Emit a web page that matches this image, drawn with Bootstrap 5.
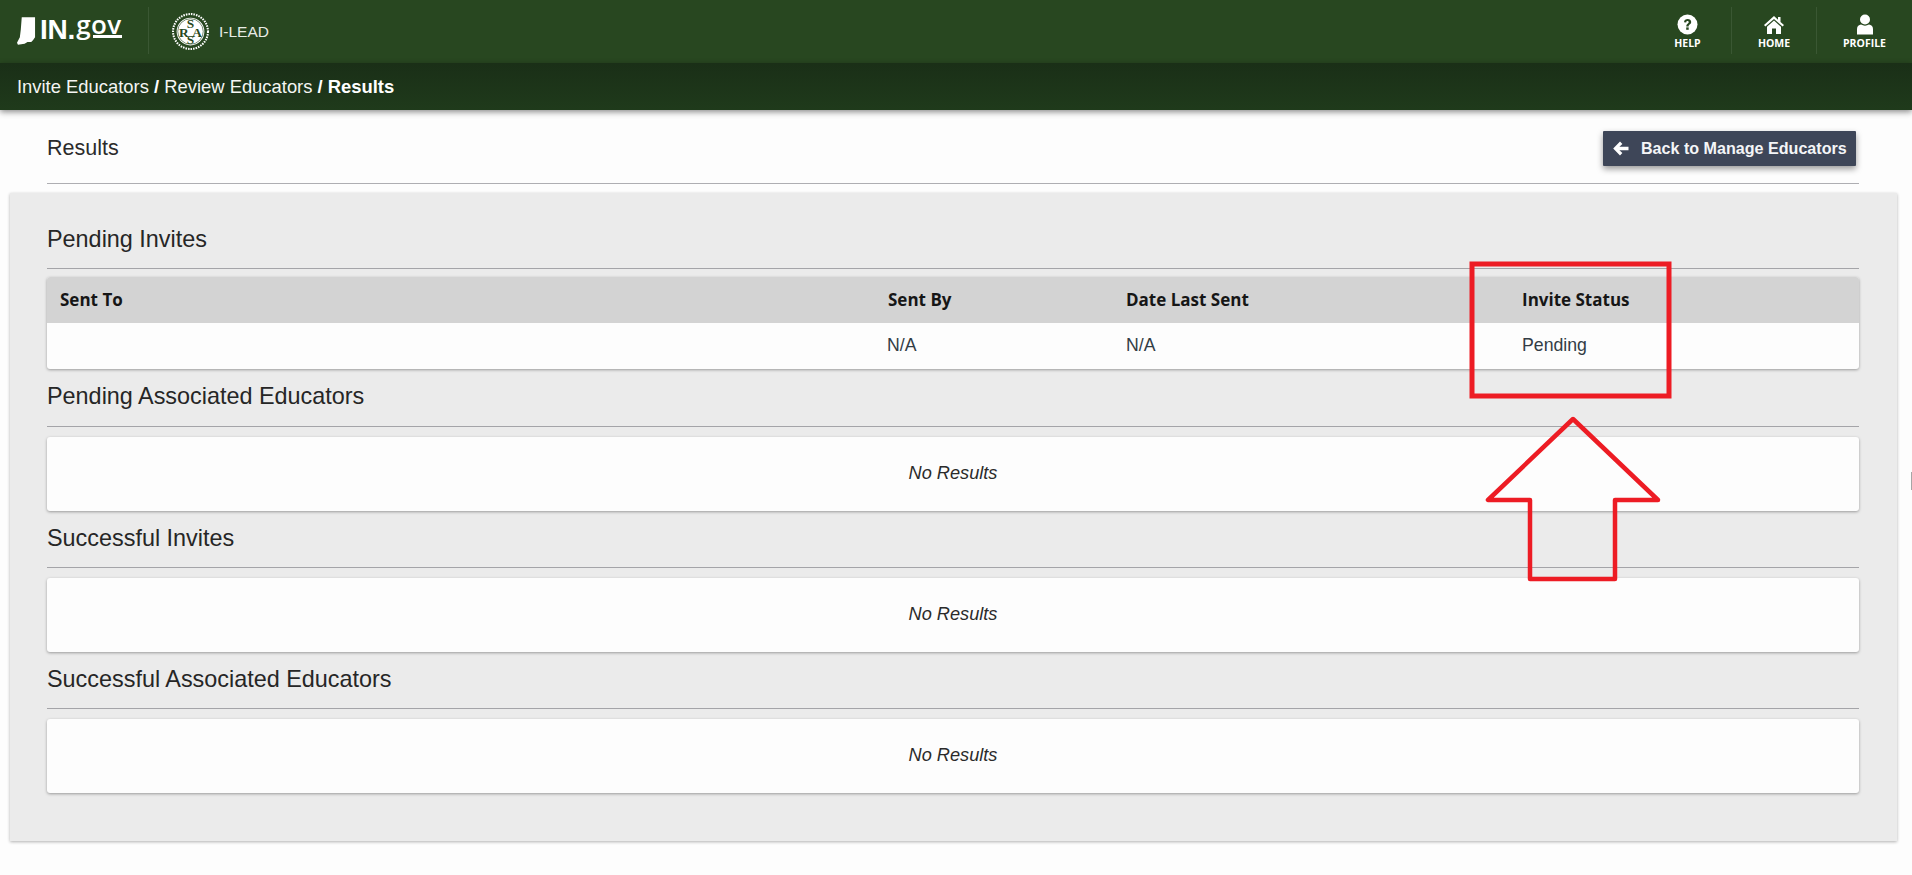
<!DOCTYPE html>
<html lang="en">
<head>
<meta charset="utf-8">
<title>Results</title>
<link href="https://cdn.jsdelivr.net/npm/bootstrap@5.3.0/dist/css/bootstrap.min.css" rel="stylesheet">
<style>
html,body{height:875px;overflow:hidden}
body{font-family:"Liberation Sans",Arial,sans-serif;background:#fdfdfd;color:#212121;position:relative}
.topbar{height:63px;background:#284720;padding:0}
.brand-in{font-family:"Liberation Sans",sans-serif;font-weight:700;font-size:28px;line-height:1;color:#fff;letter-spacing:-.2px;white-space:nowrap}
.brand-gov{position:relative;top:-5px;display:inline-block;font-family:"Open Sans",sans-serif;font-weight:600;font-size:26px;letter-spacing:.4px;margin-left:1px}
.brand-line{position:absolute;left:17px;right:0;bottom:-1px;height:3px;background:#fff}
.logo-cell{width:149px;height:47px;border-right:1px solid #3a5733;padding-left:17px;margin-bottom:3px}
.seal-cell{padding-left:23px;gap:10px;color:#e8ece6;font-size:15.5px}
.seal-type{font-family:"Liberation Serif",serif;font-size:13px;font-weight:700;fill:#284720}
.tool{height:47px;margin-bottom:3px;padding-top:7px;display:flex;flex-direction:column;align-items:center;justify-content:flex-start;color:#fff;font-family:"Open Sans",sans-serif;font-weight:700;font-size:10.5px;line-height:14px;border-right:1px solid #3a5733}
.tool svg{display:block;margin-bottom:1px}
.tool-help{width:88px}
.tool-home{width:85px}
.tool-profile{width:95px;border-right:0}
.crumbbar{height:47px;background:linear-gradient(#1a2f17,#1f3a1b);color:#f4f6f3;font-size:18.4px;padding-left:17px;box-shadow:0 2px 6px rgba(0,0,0,.45);position:relative}
.crumbbar b{color:#fff}
.headrow{margin:21px 53px 0 47px;height:53px;border-bottom:1px solid #aeaeb2;padding-right:3px}
.headrow .ttl{font-size:21.5px;line-height:34px;color:#2b2b2b}
.backbtn{width:253px;height:35px;background:#3e4658;color:#f4f5f7;font-weight:700;font-size:16.1px;border:0;border-radius:1px;box-shadow:0 3px 6px rgba(0,0,0,.4);padding:0 0 0 10px;gap:12px;white-space:nowrap}
.panel-main{margin:9px 15px 0 10px;height:648px;background:#ebebeb;box-shadow:0 1px 3px rgba(0,0,0,.3);padding:29px 38px 0 37px}
.sec-title{font-size:23.4px;line-height:35px;height:47px;color:#262626;border-bottom:1px solid #a4a4a8;margin:0;padding:0;font-weight:400}
.sec-title.later{margin-top:10px}
.sec-title.later-first{margin-top:10px;height:48px}
.result-card{height:92px;background:#fdfdfd;border-radius:3px;box-shadow:0 1px 3px rgba(0,0,0,.35);margin-top:8px;overflow:hidden}
.result-card .table{margin:0;table-layout:fixed;--bs-table-bg:transparent;font-size:17.7px}
.result-card th,.result-card td{height:46px;padding:0 0 0 12px;vertical-align:middle;border:0;box-shadow:none}
.result-card th{background:#d3d3d3;font-family:"Open Sans",sans-serif;font-size:17px;font-weight:700;color:#161616}
.result-card th:first-child{padding-left:13px}
.result-card td{color:#333c45;padding-bottom:1px}
.result-card td:nth-child(2){padding-left:11px}
.result-empty{height:74px;margin-top:10px;font-style:italic;font-size:18.2px;color:#2b2b2b}
.mark-up{position:absolute;left:0;top:0;pointer-events:none}
</style>
</head>
<body>
<header class="topbar d-flex align-items-center justify-content-between">
  <div class="d-flex align-items-center">
    <div class="logo-cell d-flex align-items-center">
      <svg width="19" height="29" viewBox="0 0 20 30" class="me-1"><path d="M5 1 L19 1 L19 22 L17 25 L15 27 L11 27 L8 29 L1 30 L0 28 L3 22 L4 14 Z" fill="#fff"/></svg>
      <span class="brand-in position-relative">IN.<span class="brand-gov">gov<span class="brand-line"></span></span></span>
    </div>
    <div class="seal-cell d-flex align-items-center">
      <svg width="37" height="37" viewBox="0 0 36 36"><circle cx="18" cy="18" r="17" fill="none" stroke="#fff" stroke-width="2" stroke-dasharray="1.5 1"/><circle cx="18" cy="18" r="13.5" fill="#fff"/><circle cx="18" cy="18" r="12.4" fill="none" stroke="#284720" stroke-width=".6"/><text class="seal-type" x="18" y="15" text-anchor="middle">S</text><text class="seal-type" x="18" y="30" text-anchor="middle">S</text><text class="seal-type" x="11.5" y="23" text-anchor="middle">R</text><text class="seal-type" x="24.5" y="23" text-anchor="middle">A</text></svg>
      <span>I-LEAD</span>
    </div>
  </div>
  <div class="d-flex align-items-center">
    <div class="tool tool-help">
      <svg width="21" height="21" viewBox="0 0 21 21"><circle cx="10.5" cy="10.5" r="10" fill="#fff"/><path d="M7 8.2 C7 5.8 9 5 10.6 5 C12.6 5 14.2 6.2 14.2 8 C14.2 10.4 11.6 10.4 11.6 12.4 H9.3 C9.3 9.6 11.7 9.6 11.7 8.2 C11.7 7.4 11.2 7 10.5 7 C9.8 7 9.3 7.5 9.2 8.4 Z" fill="#284720"/><rect x="9.2" y="13.4" width="2.5" height="2.4" fill="#284720"/></svg>
      HELP
    </div>
    <div class="tool tool-home">
      <svg width="22" height="21" viewBox="0 0 22 21"><path d="M11 2 L1 11 L2.4 12.6 L11 5 L19.6 12.6 L21 11 L17.5 7.9 V3 H15 V5.7 Z" fill="#fff"/><path d="M11 6.6 L4 12.8 V20 H9 V14.5 H13 V20 H18 V12.8 Z" fill="#fff"/></svg>
      HOME
    </div>
    <div class="tool tool-profile">
      <svg width="18" height="21" viewBox="0 0 18 21"><circle cx="9" cy="5.5" r="5" fill="#fff"/><path d="M1 20.5 V15 C1 12.3 3 10.8 5 10.6 C7.5 12 10.5 12 13 10.6 C15 10.8 17 12.3 17 15 V20.5 Z" fill="#fff"/></svg>
      PROFILE
    </div>
  </div>
</header>
<nav class="crumbbar d-flex align-items-center" aria-label="breadcrumb"><span>Invite Educators <b>/</b> Review Educators <b>/ Results</b></span></nav>

<div class="headrow d-flex justify-content-between align-items-start">
  <div class="ttl">Results</div>
  <button class="btn backbtn d-flex align-items-center" type="button">
    <svg width="16" height="15" viewBox="0 0 16 14"><path d="M7 0 L9.4 2.4 L6.4 5.2 H15.5 V8.8 H6.4 L9.4 11.6 L7 14 L0.2 7 Z" fill="#fff"/></svg>
    Back to Manage Educators
  </button>
</div>

<main class="panel-main">
  <h2 class="sec-title">Pending Invites</h2>
  <div class="result-card">
    <table class="table">
      <colgroup><col style="width:829px"><col style="width:238px"><col style="width:396px"><col></colgroup>
      <thead><tr><th>Sent To</th><th>Sent By</th><th>Date Last Sent</th><th>Invite Status</th></tr></thead>
      <tbody><tr><td></td><td>N/A</td><td>N/A</td><td>Pending</td></tr></tbody>
    </table>
  </div>
  <h2 class="sec-title later-first">Pending Associated Educators</h2>
  <div class="result-card result-empty d-flex align-items-center justify-content-center">No Results</div>
  <h2 class="sec-title later">Successful Invites</h2>
  <div class="result-card result-empty d-flex align-items-center justify-content-center">No Results</div>
  <h2 class="sec-title later">Successful Associated Educators</h2>
  <div class="result-card result-empty d-flex align-items-center justify-content-center">No Results</div>
</main>

<svg class="mark-up" width="1912" height="875" viewBox="0 0 1912 875" fill="none" stroke="#ed1c24">
  <rect x="1472" y="264" width="197" height="132" stroke-width="5"/>
  <path d="M1573 419 L1488 500 H1530 V579 H1615 V500 H1658 Z" stroke-width="4.5" stroke-linejoin="round"/>
  <path d="M1911.5 472 V490" stroke="#a6a6a6" stroke-width="1"/>
</svg>
</body>
</html>
